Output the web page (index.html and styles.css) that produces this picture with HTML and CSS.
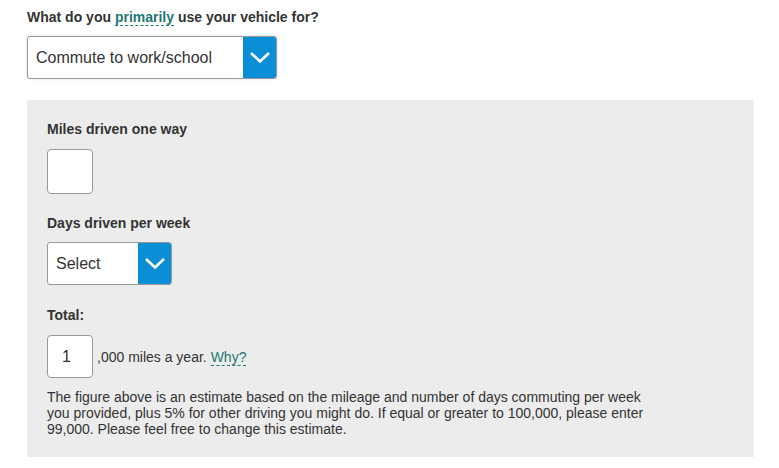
FILE: index.html
```html
<!DOCTYPE html>
<html>
<head>
  <meta charset="utf-8">
  <title>Vehicle use</title>
  <link rel="stylesheet" href="styles.css">
</head>
<body>
  <div class="container">
    <p class="question">What do you <span class="tip">primarily</span> use your vehicle for?</p>

    <div class="select select-wide">
      <span class="select-value">Commute to work/school</span>
      <span class="select-arrow">
        <svg width="22" height="13" viewBox="0 0 22 13"><path d="M2 2 L11 10.5 L20 2" fill="none" stroke="#fff" stroke-width="2.6"/></svg>
      </span>
    </div>

    <div class="panel">
      <label class="field-label">Miles driven one way</label>
      <div class="box"></div>

      <label class="field-label">Days driven per week</label>
      <div class="select select-small">
        <span class="select-value">Select</span>
        <span class="select-arrow">
          <svg width="22" height="13" viewBox="0 0 22 13"><path d="M2 2 L11 10.5 L20 2" fill="none" stroke="#fff" stroke-width="2.6"/></svg>
        </span>
      </div>

      <label class="field-label">Total:</label>
      <div class="total-row">
        <div class="box">1</div>
        <span>,000 miles a year. <span class="tip">Why?</span></span>
      </div>

      <p class="note">The figure above is an estimate based on the mileage and number of days commuting per week
        you provided, plus 5% for other driving you might do. If equal or greater to 100,000, please enter
        99,000. Please feel free to change this estimate.</p>
    </div>
  </div>
</body>
</html>
```

FILE: styles.css
```css
body {
  margin: 0;
  font-family: Arial, "Liberation Sans", sans-serif;
  color: #333;
  background: #fff;
}

.container {
  padding: 0 25px 0 27px;
}

.question {
  margin: 0;
  padding-top: 9px;
  font-size: 14px;
  font-weight: bold;
  line-height: 16px;
}

.tip {
  color: #1f7872;
  border-bottom: 1px dashed #1f7872;
}

.select {
  display: flex;
  margin-top: 11px;
  height: 43px;
  box-sizing: border-box;
  border: 1px solid #999;
  border-radius: 3px;
  background: #fff;
  overflow: hidden;
}

.select-wide {
  width: 250px;
  box-shadow: 0 0 3px rgba(120, 160, 200, 0.35);
}

.select-small {
  width: 125px;
  margin-top: 11px;
}

.select-value {
  flex: 1;
  display: flex;
  align-items: center;
  padding-left: 8px;
  font-size: 16px;
  color: #333;
}

.select-arrow {
  width: 33px;
  display: flex;
  align-items: center;
  justify-content: center;
  background: #0a8fd6;
}

.panel {
  margin-top: 21px;
  background: #ececec;
  padding: 21px 20px 20px;
}

.field-label {
  display: block;
  font-size: 14px;
  font-weight: bold;
  line-height: 16px;
}

.box {
  width: 46px;
  height: 45px;
  box-sizing: border-box;
  margin: 12px 0 21px;
  border: 1px solid #999;
  border-radius: 4px;
  background: #fff;
  font-size: 16px;
  line-height: 43px;
  padding-left: 14px;
}

.select-small + .field-label {
  margin-top: 22px;
}

.total-row {
  display: flex;
  align-items: center;
  gap: 4px;
  margin-top: 12px;
  font-size: 14px;
}

.total-row .box {
  height: 43px;
  margin: 0;
  line-height: 41px;
}

.note {
  width: 600px;
  margin: 11px 0 0;
  font-size: 14px;
  line-height: 16px;
}
```
